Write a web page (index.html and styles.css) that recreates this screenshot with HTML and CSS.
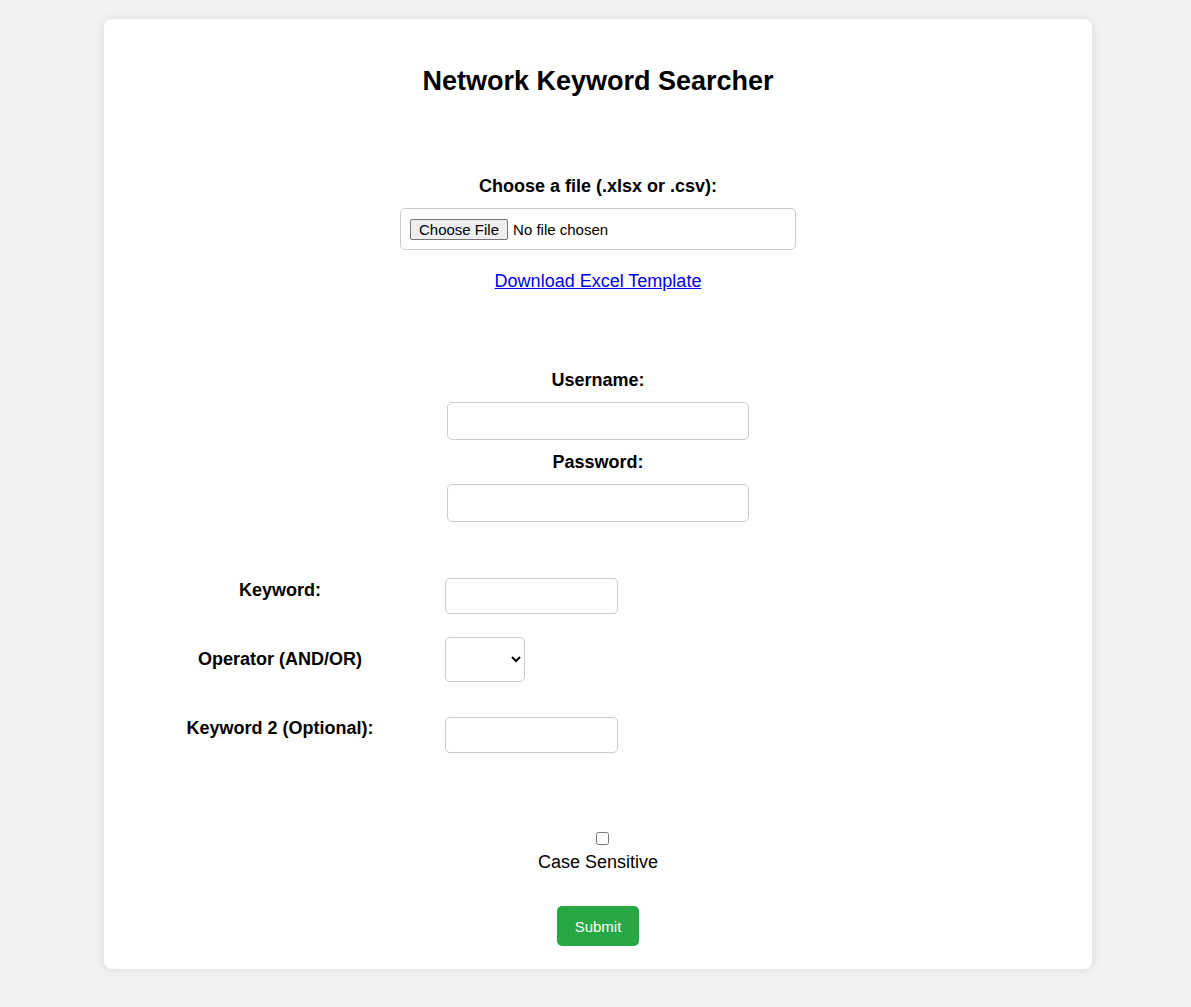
FILE: index.html
```html
<!DOCTYPE html>
<html lang="en">
<head>
<meta charset="utf-8">
<title>Network Keyword Searcher</title>
<link rel="stylesheet" href="styles.css">
</head>
<body>
<div class="page">
  <main class="card">
    <h2 class="title">Network Keyword Searcher</h2>

    <section class="stack file-section">
      <label class="field-label" for="file">Choose a file (.xlsx or .csv):</label>
      <input class="file-input" type="file" id="file" accept=".xlsx,.csv">
      <a class="template-link" href="#">Download Excel Template</a>
    </section>

    <section class="stack credentials">
      <label class="field-label" for="username">Username:</label>
      <input class="text-input wide" type="text" id="username">
      <label class="field-label spaced" for="password">Password:</label>
      <input class="text-input wide" type="password" id="password">
    </section>

    <section class="keywords">
      <div class="kw-row first">
        <label class="kw-label" for="kw1">Keyword:</label>
        <input class="text-input short" type="text" id="kw1">
      </div>
      <div class="kw-row second">
        <label class="kw-label op" for="op">Operator (AND/OR)</label>
        <select class="op-select" id="op">
          <option></option>
          <option>AND</option>
          <option>OR</option>
        </select>
      </div>
      <div class="kw-row">
        <label class="kw-label third" for="kw2">Keyword 2 (Optional):</label>
        <input class="text-input short" type="text" id="kw2">
      </div>
    </section>

    <div class="case">
      <input class="case-box" type="checkbox" id="case">
    </div>
    <label class="case-label" for="case">Case Sensitive</label>

    <button class="submit" type="submit">Submit</button>
  </main>
</div>
</body>
</html>
```

FILE: styles.css
```css
html, body {
  margin: 0;
  padding: 0;
}

body {
  background: #f2f2f2;
  font-family: "Liberation Sans", Arial, sans-serif;
  font-size: 18px;
  color: #000;
}

.page {
  padding: 19px 0 38px 104px;
}

.card {
  width: 988px;
  box-sizing: border-box;
  background: #fff;
  border-radius: 8px;
  box-shadow: 0 0 10px rgba(0, 0, 0, 0.1);
  padding: 20px 0 23px;
  text-align: center;
}

.title {
  margin: 27px 0 0;
  font-size: 27px;
  line-height: 31px;
  font-weight: bold;
}

.stack {
  display: flex;
  flex-direction: column;
  align-items: center;
}

.file-section {
  margin-top: 78px;
}

.field-label {
  display: block;
  font-weight: bold;
  line-height: 21px;
  padding-top: 1px;
  margin-bottom: 11px;
}

.field-label.spaced {
  margin-top: 11px;
}

.file-input {
  width: 396px;
  height: 42px;
  box-sizing: border-box;
  padding: 10px 9px 0;
  border: 1px solid #ccc;
  border-radius: 5px;
  font-family: "Liberation Sans", Arial, sans-serif;
  font-size: 15px;
  line-height: 21px;
  background: #fff;
}

.file-input::file-selector-button {
  height: 21px;
  padding: 0 8px;
  margin: 0 5px 0 0;
  border: 1px solid #767676;
  border-radius: 2px;
  background: #efefef;
  color: #000;
  font-family: "Liberation Sans", Arial, sans-serif;
  font-size: 15px;
}

.template-link {
  margin-top: 20px;
  padding-top: 1px;
  line-height: 21px;
  color: #0000ee;
  text-decoration: underline;
}

.credentials {
  margin-top: 77px;
}

.text-input {
  box-sizing: border-box;
  border: 1px solid #ccc;
  border-radius: 5px;
  padding: 8px;
  font-family: "Liberation Sans", Arial, sans-serif;
  font-size: 16px;
  background: #fff;
  margin: 0;
}

.text-input.wide {
  width: 302px;
  height: 38px;
}

.text-input.short {
  width: 173px;
  height: 36px;
}

.keywords {
  margin-top: 56px;
  margin-left: 76px;
  display: flex;
  flex-direction: column;
}

.kw-row {
  display: flex;
  align-items: flex-start;
  gap: 65px;
}

.kw-row.first {
  margin-bottom: 23px;
}

.kw-row.second {
  margin-bottom: 35px;
}

.kw-label {
  width: 200px;
  text-align: center;
  font-weight: bold;
  line-height: 21px;
  margin-top: 2px;
}

.kw-label.op {
  margin-top: 12px;
}

.kw-label.third {
  margin-top: 1px;
}

.op-select {
  width: 80px;
  height: 45px;
  box-sizing: border-box;
  border: 1px solid #ccc;
  border-radius: 5px;
  background: #fff;
  font-family: "Liberation Sans", Arial, sans-serif;
  font-size: 16px;
  padding: 8px;
  margin: 0;
}

.case {
  margin-top: 78px;
  display: flex;
  justify-content: center;
  padding-left: 8px;
}

.case-box {
  width: 13px;
  height: 13px;
  margin: 1px 0 0;
}

.case-label {
  display: block;
  margin-top: 7px;
  line-height: 21px;
}

.submit {
  display: block;
  margin: 33px auto 0;
  width: 82px;
  height: 40px;
  border: 0;
  border-radius: 5px;
  background: #28a745;
  color: #fff;
  font-family: "Liberation Sans", Arial, sans-serif;
  font-size: 15px;
  cursor: pointer;
}
```
